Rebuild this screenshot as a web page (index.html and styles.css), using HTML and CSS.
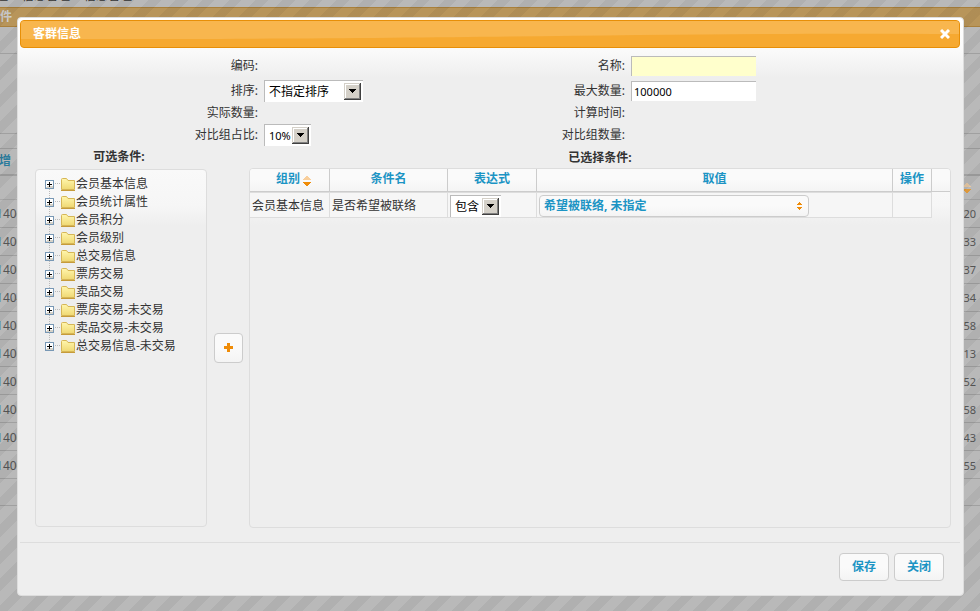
FILE: index.html
```html
<!DOCTYPE html>
<html lang="zh-CN">
<head>
<meta charset="utf-8">
<title>客群信息</title>
<link rel="stylesheet" href="styles.css">
</head>
<body>
<svg class="defs" aria-hidden="true">
  <symbol id="arrow" viewBox="0 0 17 17">
    <path fill="#404040" d="M0 0h17v17H0z"/><path fill="#d4d0c8" d="M0 0h16v16H0z"/>
    <path fill="#808080" d="M1 15h14V1h1v15H1z"/><path fill="#fff" d="M1 1h14v1H2v13H1z"/>
    <path d="M5 6h7v1h-1v1h-1v1H9v1H8V9H7V8H6V7H5z"/>
  </symbol>
  <symbol id="expand" viewBox="0 0 9 9">
    <path fill="#7898b5" d="M0 0h9v9H0z"/><path fill="#fff" d="M1 1h7v7H1z"/><path fill="#d6d2c8" d="M2 6h6v2H1V7h1z"/>
    <path d="M2 4h2V2h1v2h2v1H5v2H4V5H2z"/>
  </symbol>
  <symbol id="folder" viewBox="0 0 14 13">
    <linearGradient id="fold" x2="0" y2="1"><stop stop-color="#fff6ad"/><stop offset="1" stop-color="#efd873"/></linearGradient>
    <path fill="url(#fold)" stroke="#d6b656" d="M.5 1.5q0-1 1-1h4l1.500 2h6.500v9H.5z"/><path fill="#c69b3a" d="M0 12h14v1H0z"/>
  </symbol>
  <symbol id="sort" viewBox="0 0 8 10">
    <path fill="#f9cf9c" d="M0 4h8v-1H7V2H6V1H5V0H3v1H2v1H1v1H0z"/><path fill="#ef8c08" d="M0 6h8v1H7v1H6v1H5v1H3V9H2V8H1V7H0z"/>
  </symbol>
</svg>
<div class="page" aria-hidden="true">
  <div class="crumbs"><span>理</span><span>信息管理</span><span>信息管理</span></div>
  <div class="bar">件</div>
  <div class="filter"></div>
  <div class="gap"></div>
  <div class="tools">增</div>
  <div class="head"><svg width="8" height="10"><use href="#sort"/></svg></div>
  <div class="rows">
    <div><span><i>1</i>406</span><span>20</span></div>
    <div><span><i>1</i>406</span><span>33</span></div>
    <div><span><i>1</i>406</span><span>37</span></div>
    <div><span><i>1</i>404</span><span>34</span></div>
    <div><span><i>1</i>406</span><span>58</span></div>
    <div><span><i>1</i>406</span><span>13</span></div>
    <div><span><i>1</i>406</span><span>52</span></div>
    <div><span><i>1</i>406</span><span>58</span></div>
    <div><span><i>1</i>406</span><span>43</span></div>
    <div><span><i>1</i>406</span><span>55</span></div>
  </div>
  <div class="pager"></div>
</div>
<div class="overlay"></div>
<form class="dialog" role="dialog" aria-labelledby="dialog-title">
  <header class="titlebar">
    <svg class="gloss" viewBox="0 0 940 26" preserveAspectRatio="none" aria-hidden="true"><path fill="#f8b64e" d="M0 0h940v13C620 11 460 19 0 18z"/></svg>
    <h1 id="dialog-title">客群信息</h1>
    <button type="button" class="close" aria-label="关闭窗口"><svg width="10" height="10" viewBox="0 0 10 10"><path stroke="#fff" stroke-width="3" d="M1 1l8 8M9 1L1 9"/></svg></button>
  </header>
  <div class="fields">
    <span class="label">编码:</span><span></span>
    <label for="name">名称:</label><span><input id="name" class="required" type="text"></span>
    <label for="order">排序:</label><span><span class="select wide"><select id="order"><option>不指定排序</option></select><svg><use href="#arrow"/></svg></span></span>
    <label for="max">最大数量:</label><span><input id="max" type="text" value="100000"></span>
    <span class="label">实际数量:</span><span></span>
    <span class="label">计算时间:</span><span></span>
    <label for="ratio">对比组占比:</label><span><span class="select ratio"><select id="ratio"><option>10%</option></select><svg><use href="#arrow"/></svg></span></span>
    <span class="label">对比组数量:</span><span></span>
  </div>
  <div class="picker">
    <section class="available">
      <h2>可选条件:</h2>
      <ul class="panel tree">
        <li><svg class="toggle"><use href="#expand"/></svg><svg class="folder"><use href="#folder"/></svg>会员基本信息</li>
        <li><svg class="toggle"><use href="#expand"/></svg><svg class="folder"><use href="#folder"/></svg>会员统计属性</li>
        <li><svg class="toggle"><use href="#expand"/></svg><svg class="folder"><use href="#folder"/></svg>会员积分</li>
        <li><svg class="toggle"><use href="#expand"/></svg><svg class="folder"><use href="#folder"/></svg>会员级别</li>
        <li><svg class="toggle"><use href="#expand"/></svg><svg class="folder"><use href="#folder"/></svg>总交易信息</li>
        <li><svg class="toggle"><use href="#expand"/></svg><svg class="folder"><use href="#folder"/></svg>票房交易</li>
        <li><svg class="toggle"><use href="#expand"/></svg><svg class="folder"><use href="#folder"/></svg>卖品交易</li>
        <li><svg class="toggle"><use href="#expand"/></svg><svg class="folder"><use href="#folder"/></svg>票房交易-未交易</li>
        <li><svg class="toggle"><use href="#expand"/></svg><svg class="folder"><use href="#folder"/></svg>卖品交易-未交易</li>
        <li><svg class="toggle"><use href="#expand"/></svg><svg class="folder"><use href="#folder"/></svg>总交易信息-未交易</li>
      </ul>
    </section>
    <div class="move"><button type="button" class="button add" aria-label="添加"><svg width="9" height="9"><path fill="#ef8c08" d="M3 0h3v3h3v3H6v3H3V6H0V3h3z"/></svg></button></div>
    <section class="selected">
      <h2>已选择条件:</h2>
      <div class="panel">
        <table>
          <colgroup><col class="c-group"><col class="c-name"><col class="c-expr"><col><col class="c-act"><col class="c-end"></colgroup>
          <thead><tr><th>组别 <svg width="8" height="10"><use href="#sort"/></svg></th><th>条件名</th><th>表达式</th><th>取值</th><th>操作</th><th></th></tr></thead>
          <tbody><tr>
            <td>会员基本信息</td><td>是否希望被联络</td>
            <td><span class="select expr"><select aria-label="表达式"><option>包含</option></select><svg><use href="#arrow"/></svg></span></td>
            <td><button type="button" class="button multi">希望被联络, 未指定<svg width="5" height="8"><path fill="#ef8c08" d="M2 0h1v1h1v1h1v1H0V2h1V1h1zM0 5h5v1H4v1H3v1H2V7H1V6H0z"/></svg></button></td>
            <td></td><td class="end"></td>
          </tr></tbody>
        </table>
      </div>
    </section>
  </div>
  <footer><button type="button" class="button">保存</button><button type="button" class="button">关闭</button></footer>
</form>
</body>
</html>
```
FILE: styles.css
```css
* { box-sizing: border-box; }
body {
  margin: 0;
  min-height: 100vh;
  position: relative;
  overflow: hidden;
  background: #b9b9b9;
  color: #333;
  font: 12px/18px "Noto Sans", "Noto Sans CJK SC", sans-serif;
}
h1, h2, ul { margin: 0; padding: 0; font-size: 12px; }
input, select, button { font: inherit; }
svg { display: block; }
.defs { position: absolute; width: 0; height: 0; }

/* Page behind the dialog */
.page { color: #555; font-size: 12px; }
.crumbs { height: 7px; display: flex; align-items: flex-end; gap: 14px; color: #333; }
.crumbs span { margin-bottom: 2px; }
.crumbs span:first-child { margin-left: -4px; }
.bar { height: 20px; border: 1px solid #a9803c; border-width: 1px 0; background: #b8955a; color: #d0d0d0; font-weight: bold; }
.filter { height: 107px; border-bottom: 1px solid #a0a0a0; background: linear-gradient(transparent 26px, #a0a0a0 26px, #a0a0a0 27px, transparent 27px); }
.gap { height: 15px; border-bottom: 1px solid #a0a0a0; }
.tools { height: 27px; padding-top: 3px; border-bottom: 2px solid #a0a0a0; color: #2c7c9c; font-weight: bold; margin-left: -1px; }
.head { height: 24px; display: flex; justify-content: flex-end; align-items: center; padding-right: 9px; border-bottom: 1px solid #a0a0a0; opacity: .7; }
.rows { height: 279px; display: flex; flex-direction: column; }
.rows div { flex: 1; display: flex; justify-content: space-between; align-items: center; padding: 2px 4px 0 0; border-bottom: 1px solid #a0a0a0; }
.rows span:first-child { margin-left: -4px; }
.rows i { font-style: normal; color: #4a7ba5; }
.rows span:last-child { font-size: 11px; }
.pager { height: 27px; border-bottom: 1px solid #a0a0a0; }
.overlay { position: absolute; inset: 0; background: repeating-linear-gradient(135deg, transparent 0 10px, rgba(0, 0, 0, .05) 10px 19px); }

/* Dialog */
.dialog {
  position: absolute;
  inset: 17px 16px auto 17px;
  padding: 2px 3px 14px 2px;
  border: 1px solid #ddd;
  border-radius: 4px;
  background: #eee linear-gradient(#fff, #fcfcfc 28px, #eee 60px) no-repeat;
}
.titlebar { position: relative; display: flex; justify-content: space-between; align-items: center; height: 28px; padding: 0 9px 0 12px; border: 1px solid #e78f08; border-radius: 4px; background: #f6a931; color: #fff; overflow: hidden; }
.gloss { position: absolute; inset: 0; width: 100%; height: 100%; }
.titlebar h1, .close { position: relative; }
.close { padding: 0; border: 0; background: none; }

.fields { display: grid; grid-template-columns: 238fr 129fr 238fr 335fr; grid-template-rows: 28px 22px 22px 22px; align-items: center; padding-top: 4px; height: 101px; }
.fields > label, .fields > .label { text-align: right; }
.fields > span:not(.label) { padding-left: 6px; }
input { display: block; width: 125px; height: 20px; padding: 0 2px; border: solid #bbb; border-width: 1px 0 0 1px; background: #fff; color: #000; font-size: 11px; }
.required { background: #ffffcc; }

.select { position: relative; display: block; height: 22px; border: solid #bbb; border-width: 1px 0 0 1px; background: #fff; }
.select select { display: block; width: 100%; height: 21px; padding: 0 18px 0 4px; border: 0; appearance: none; background: none; color: #000; }
.select svg { position: absolute; right: 2px; top: 2px; width: 17px; height: 17px; pointer-events: none; }
.wide { width: 99px; }
.ratio { width: 47px; }
.ratio select { font-size: 11px; }
.expr { width: 51px; }

.picker { display: grid; grid-template-columns: 172px 42px 1fr; padding: 0 9px 14px 15px; border-bottom: 1px solid #ddd; }
.picker h2 { text-align: center; height: 20px; line-height: 16px; }
.available h2 { padding-right: 4px; }
.panel { height: 358px; border: 1px solid #ddd; border-radius: 4px; background: linear-gradient(#f9f9f9, #f6f6f6 36px, #eee 56px); overflow: hidden; }
.selected .panel { height: 360px; }
.picker .selected h2 { height: 19px; line-height: 18px; }
.move { display: flex; align-items: center; justify-content: center; padding-top: 18px; }
.add { width: 29px; height: 30px; }
.tree { list-style: none; padding: 5px 0 0 9px; }
.tree li { position: relative; display: flex; align-items: center; height: 18px; }
.tree li + li::before { content: ""; position: absolute; left: 4px; top: -4px; height: 9px; border-left: 1px dotted #bbb; }
.toggle { width: 9px; height: 9px; }
.folder { width: 14px; height: 13px; margin: 0 1px 0 7px; }
.tree li::after { content: ""; position: absolute; left: 10px; top: 8px; width: 5px; border-top: 1px dotted #bbb; }

table { width: 100%; border-collapse: separate; border-spacing: 0; table-layout: fixed; }
.c-group { width: 80px; }
.c-name { width: 118px; }
.c-expr { width: 89px; }
.c-act { width: 39px; }
.c-end { width: 18px; }
th { height: 23px; padding: 0 0 3px; border: solid #ccc; border-width: 0 1px 1px 0; background: linear-gradient(#fafafa 50%, #f4f4f4); color: #1c94c4; }
th:last-child { border-right: 0; }
th:first-child { padding-left: 8px; }
th svg { display: inline-block; vertical-align: -3px; }
td { height: 26px; padding: 2px 2px 0; border: solid #ddd; border-width: 1px 1px 1px 0; background: #f6f6f6; white-space: nowrap; line-height: 18px; }
td.end { border: 0; background: none; }

.button { display: inline-flex; align-items: center; justify-content: center; padding: 0; border: 1px solid #ccc; border-radius: 4px; background: linear-gradient(#fafafa 50%, #f4f4f4); color: #1c94c4; font-weight: bold; }
.multi { width: 270px; height: 22px; justify-content: space-between; padding: 0 6px 0 4px; display: flex; }
footer { display: flex; justify-content: flex-end; gap: 5px; padding: 10px 16px 0 0; }
footer .button { width: 50px; height: 28px; }
```
